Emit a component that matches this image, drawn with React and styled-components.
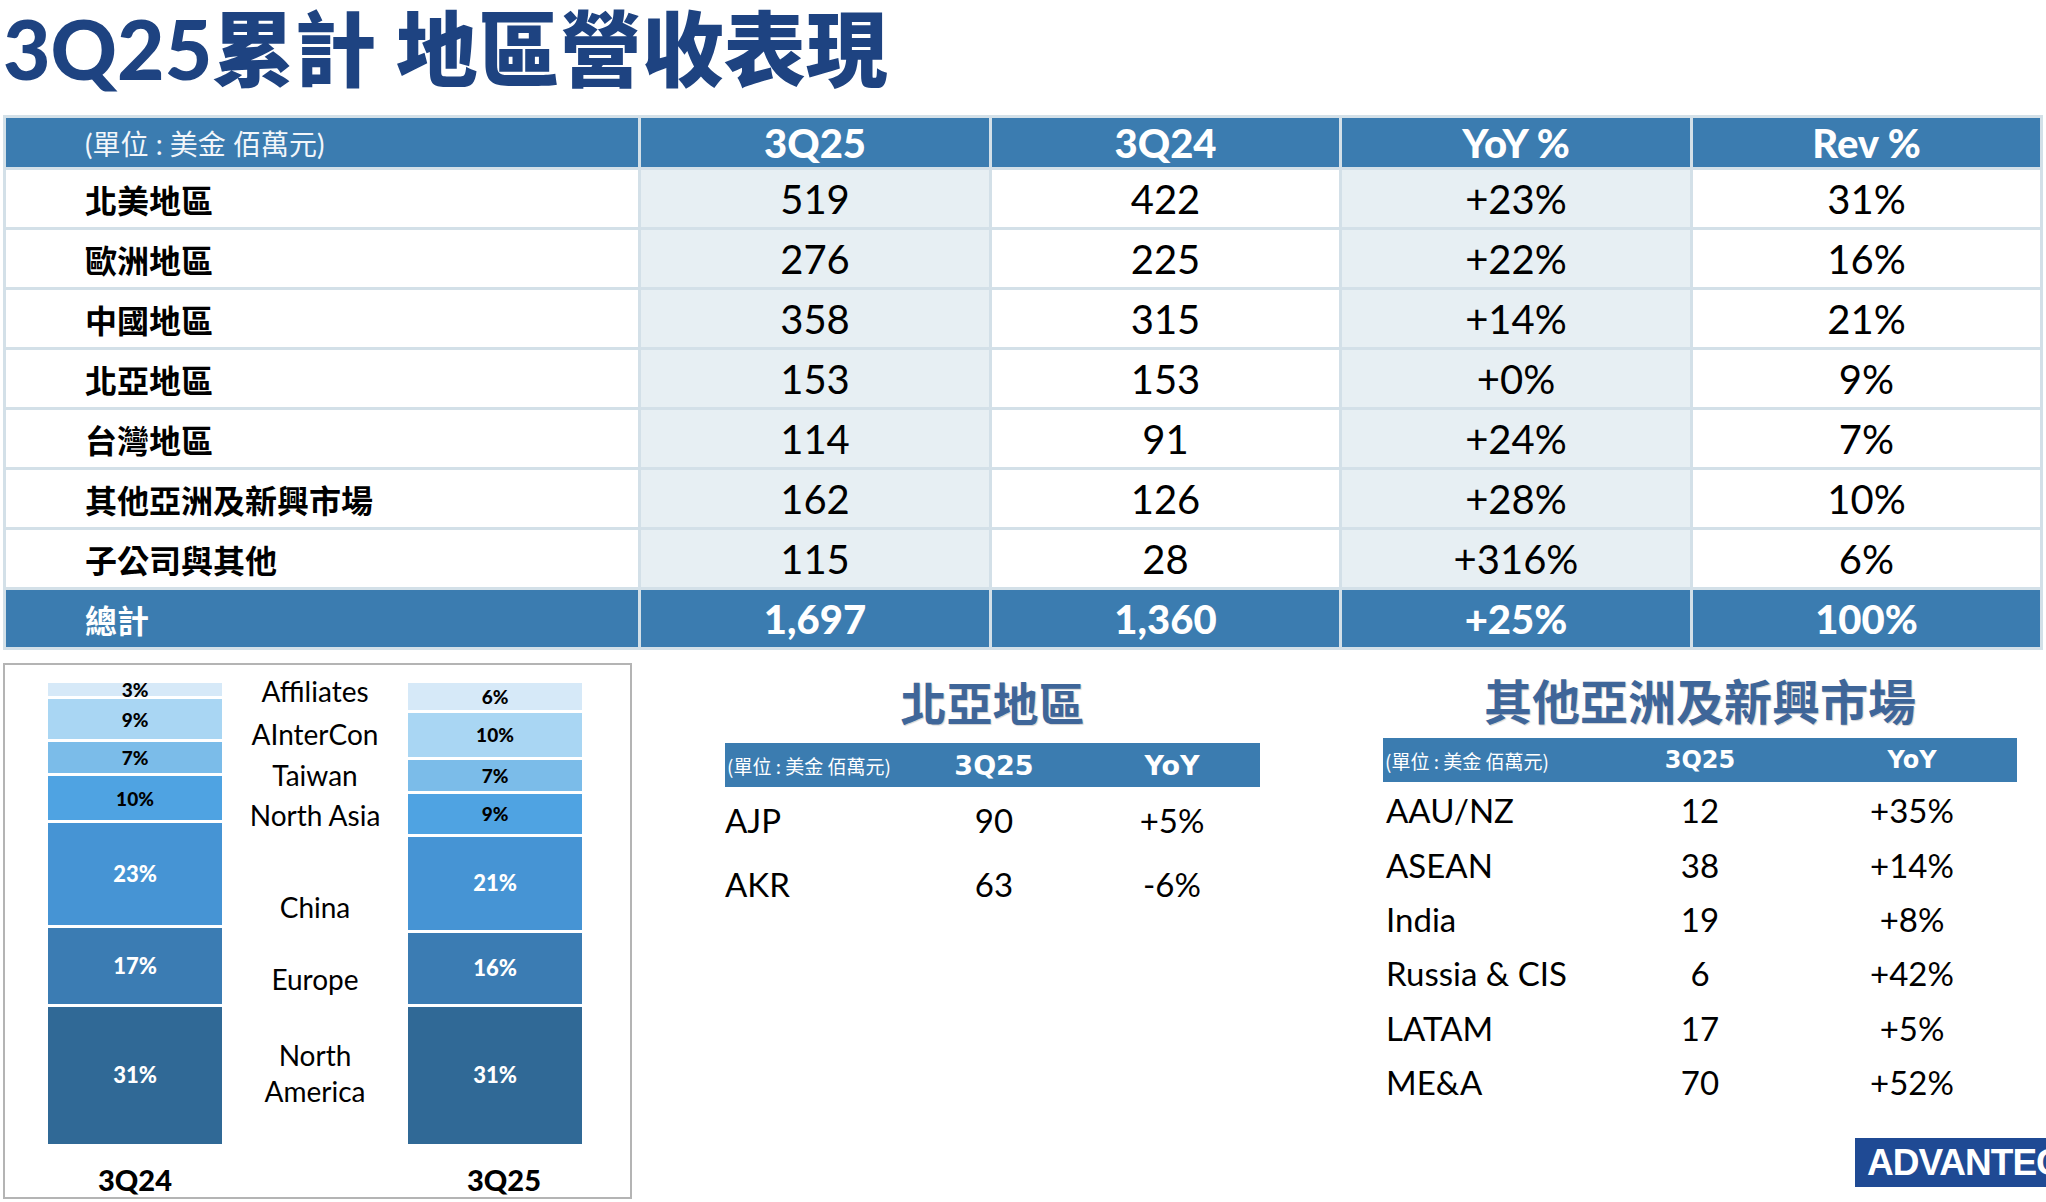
import React from 'react';
import styled, { createGlobalStyle } from 'styled-components';

const color = {
	navy: '#1e4381',
	blue: '#3b7cb0',
	line: '#d3e0e8',
	tint: '#e7eff3',
	section: '#3f6699',
	logo: '#1f4a94',
};

const sans = `Lato, "Noto Sans CJK TC", sans-serif`;

const GlobalStyle = createGlobalStyle`
	html, body {
		margin: 0;
		padding: 0;
		background: #fff;
	}
	body {
		font-family: ${sans};
		color: #000;
	}
`;

const Page = styled.div`
	width: 2046px;
	height: 1202px;
	overflow: hidden;
	box-sizing: border-box;
	padding: 0 3px;
	display: flex;
	flex-direction: column;
`;

const Title = styled.h1`
	margin: 0 0 19px;
	height: 96px;
	line-height: 96px;
	font-family: Lato, "Noto Sans CJK TC", sans-serif;
	font-weight: 900;
	font-size: 82px;
	color: ${color.navy};
	letter-spacing: 0;
	white-space: nowrap;
`;

const Table = styled.div`
	display: grid;
	grid-template-columns: 632px 348px 347px 348px 347px;
	grid-template-rows: 49px repeat(8, 57px);
	gap: 3px;
	padding: 3px;
	width: 2040px;
	box-sizing: border-box;
	background: ${color.line};
`;

const Cell = styled.div`
	display: flex;
	align-items: center;
	justify-content: ${(p) => (p.$left ? 'flex-start' : 'center')};
	padding-left: ${(p) => (p.$left ? '79px' : '0')};
	background: ${(p) => (p.$head ? color.blue : p.$tint ? color.tint : '#fff')};
	color: ${(p) => (p.$head ? '#fff' : '#000')};
	font-size: 40px;
	font-weight: ${(p) => (p.$head ? 900 : 400)};
	white-space: nowrap;

	&.label {
		font-size: 32px;
		font-weight: 700;
	}
	&.unit {
		font-size: 28px;
		font-weight: 400;
		color: #f2f6fa;
	}
`;

const Bottom = styled.div`
	display: flex;
	margin-top: 13px;
	flex: 1;
`;

const ChartPanel = styled.div`
	width: 629px;
	height: 536px;
	box-sizing: border-box;
	border: 2px solid #b4b4b4;
	padding: 18px 0 0 43px;
	display: grid;
	grid-template-columns: 174px 186px 174px;
	grid-template-rows: 461px auto;
`;

const Bar = styled.div`
	display: flex;
	flex-direction: column;
	gap: 3px;
`;

const Segment = styled.div`
	flex: ${(p) => p.$pct} 1 0;
	min-height: 0;
	background: ${(p) => p.$bg};
	color: ${(p) => (p.$light ? '#fff' : '#000')};
	font-size: ${(p) => (p.$light ? '22px' : '19px')};
	font-weight: 900;
	line-height: 1;
	display: flex;
	align-items: center;
	justify-content: center;
	overflow: visible;
`;

const Legend = styled.div`
	display: flex;
	flex-direction: column;
	margin-top: -10px;
`;

const LegendLabel = styled.div`
	margin-top: ${(p) => p.$top}px;
	flex: none;
	text-align: center;
	font-size: 28px;
	line-height: 36px;
	white-space: pre-line;
`;

const AxisLabel = styled.div`
	margin-top: 19px;
	padding-left: ${(p) => p.$shift || 0}px;
	text-align: center;
	font-size: 29px;
	font-weight: 900;
	line-height: 34px;
`;

const Section = styled.div`
	margin-left: ${(p) => p.$offset}px;
	width: ${(p) => p.$width}px;
	display: flex;
	flex-direction: column;
`;

const SectionTitle = styled.h2`
	margin: 0;
	padding-top: ${(p) => p.$top}px;
	height: 56px;
	line-height: 56px;
	text-align: center;
	font-family: "Noto Sans CJK TC", sans-serif;
	font-size: ${(p) => p.$size}px;
	font-weight: 700;
	color: ${color.section};
	text-shadow: 1px 1px 1px rgba(0, 0, 0, 0.18);
	white-space: nowrap;
`;

const MiniHead = styled.div`
	margin-top: ${(p) => p.$gap}px;
	height: 44px;
	display: grid;
	grid-template-columns: ${(p) => p.$cols};
	align-items: center;
	background: ${color.blue};
	color: #fff;

	.unit {
		padding-left: 2px;
		font-family: "Noto Sans CJK TC", sans-serif;
		font-size: 19px;
		font-weight: 400;
		white-space: nowrap;
	}
	.col {
		text-align: center;
		font-family: "DejaVu Sans", sans-serif;
		font-weight: 700;
		font-size: ${(p) => p.$size}px;
	}
`;

const MiniRow = styled.div`
	height: ${(p) => p.$h}px;
	display: grid;
	grid-template-columns: ${(p) => p.$cols};
	align-items: center;
	font-size: 33px;

	span {
		white-space: nowrap;
	}
	span + span {
		text-align: center;
	}
`;

const Logo = styled.div`
	margin-top: auto;
	margin-bottom: 15px;
	margin-right: -80px;
	align-self: flex-end;
	width: 242px;
	height: 49px;
	background: ${color.logo};
	color: #fff;
	display: flex;
	align-items: center;
	padding-left: 12px;
	box-sizing: border-box;
	font-family: "Liberation Sans", Arial, sans-serif;
	font-weight: 700;
	font-size: 37px;
	letter-spacing: -1px;
`;

const mainRows = [
	['北美地區', '519', '422', '+23%', '31%'],
	['歐洲地區', '276', '225', '+22%', '16%'],
	['中國地區', '358', '315', '+14%', '21%'],
	['北亞地區', '153', '153', '+0%', '9%'],
	['台灣地區', '114', '91', '+24%', '7%'],
	['其他亞洲及新興市場', '162', '126', '+28%', '10%'],
	['子公司與其他', '115', '28', '+316%', '6%'],
];
const totalRow = ['總計', '1,697', '1,360', '+25%', '100%'];

const shades = ['#d6e9f8', '#a9d6f3', '#7bbce9', '#4fa3e2', '#4694d4', '#3b7cb3', '#306996'];
const bar24 = [3, 9, 7, 10, 23, 17, 31];
const bar25 = [6, 10, 7, 9, 21, 16, 31];

// label, space above it (px)
const legend = [
	['Affiliates', 0],
	['AInterCon', 7],
	['Taiwan', 5],
	['North Asia', 4],
	['China', 56],
	['Europe', 36],
	['North\nAmerica', 40],
];

const northAsia = [
	['AJP', '90', '+5%'],
	['AKR', '63', '-6%'],
];

const otherAsia = [
	['AAU/NZ', '12', '+35%'],
	['ASEAN', '38', '+14%'],
	['India', '19', '+8%'],
	['Russia & CIS', '6', '+42%'],
	['LATAM', '17', '+5%'],
	['ME&A', '70', '+52%'],
];

const StackBar = ({ values }) => (
	<Bar>
		{values.map((v, i) => (
			<Segment key={i} $pct={v} $bg={shades[i]} $light={i >= 4}>
				{v}%
			</Segment>
		))}
	</Bar>
);

const unit = '(單位 : 美金 佰萬元)';

const App = () => {
	return (
		<>
			<GlobalStyle />
			<Page>
				<Title>3Q25累計 地區營收表現</Title>
				<Table>
					<Cell $head $left className="unit">{unit}</Cell>
					<Cell $head>3Q25</Cell>
					<Cell $head>3Q24</Cell>
					<Cell $head>YoY %</Cell>
					<Cell $head>Rev %</Cell>
					{mainRows.map((row) =>
						row.map((val, i) => (
							<Cell
								key={row[0] + i}
								$left={i === 0}
								$tint={i === 1 || i === 3}
								className={i === 0 ? 'label' : ''}
							>
								{val}
							</Cell>
						))
					)}
					{totalRow.map((val, i) => (
						<Cell key={'t' + i} $head $left={i === 0} className={i === 0 ? 'label' : ''}>
							{val}
						</Cell>
					))}
				</Table>

				<Bottom>
					<ChartPanel>
						<StackBar values={bar24} />
						<Legend>
							{legend.map(([name, top]) => (
								<LegendLabel key={name} $top={top}>{name}</LegendLabel>
							))}
						</Legend>
						<StackBar values={bar25} />
						<AxisLabel>3Q24</AxisLabel>
						<div />
						<AxisLabel $shift={18}>3Q25</AxisLabel>
					</ChartPanel>

					<Section $offset={93} $width={535}>
						<SectionTitle $top={10} $size={46}>北亞地區</SectionTitle>
						<MiniHead $gap={14} $cols="179px 180px 176px" $size={27}>
							<span className="unit">{unit}</span>
							<span className="col">3Q25</span>
							<span className="col">YoY</span>
						</MiniHead>
						<div style={{ marginTop: 1 }}>
							{northAsia.map((r) => (
								<MiniRow key={r[0]} $h={64} $cols="179px 180px 176px">
									<span>{r[0]}</span>
									<span>{r[1]}</span>
									<span>{r[2]}</span>
								</MiniRow>
							))}
						</div>
					</Section>

					<Section $offset={123} $width={634}>
						<SectionTitle $top={8} $size={48}>其他亞洲及新興市場</SectionTitle>
						<MiniHead $gap={11} $cols="210px 214px 210px" $size={24}>
							<span className="unit">{unit}</span>
							<span className="col">3Q25</span>
							<span className="col">YoY</span>
						</MiniHead>
						<div style={{ marginTop: 1, paddingLeft: 3 }}>
							{otherAsia.map((r) => (
								<MiniRow key={r[0]} $h={54.4} $cols="207px 214px 210px">
									<span>{r[0]}</span>
									<span>{r[1]}</span>
									<span>{r[2]}</span>
								</MiniRow>
							))}
						</div>
						<Logo>ADVANTECH</Logo>
					</Section>
				</Bottom>
			</Page>
		</>
	);
};

export default App;
